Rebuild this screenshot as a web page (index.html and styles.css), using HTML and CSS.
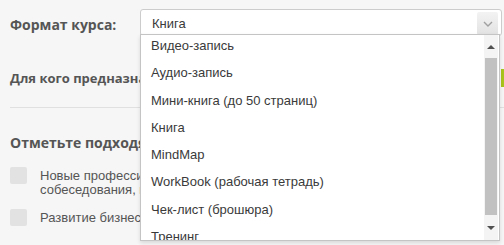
FILE: index.html
```html
<!DOCTYPE html>
<html lang="ru">
<head>
    <meta charset="UTF-8">
    <meta name="viewport" content="width=device-width, initial-scale=1.0">
    <title>Формат курса</title>
    <link rel="stylesheet" href="styles.css">
</head>
<body>

<div class="course-form">
    <div class="field-row">
        <label class="field-label">Формат курса:</label>
        <div class="select-box">
            <span class="select-value">Книга</span>
            <span class="select-arrow">
                <svg width="10" height="6" viewBox="0 0 10 6"><path d="M1 1 L5 5 L9 1" fill="none" stroke="#a0a0a0" stroke-width="1.4"/></svg>
            </span>

            <!-- открытый список -->
            <div class="select-options">
                <ul class="option-list">
                    <li>Видео-запись</li>
                    <li>Аудио-запись</li>
                    <li>Мини-книга (до 50 страниц)</li>
                    <li>Книга</li>
                    <li>MindMap</li>
                    <li>WorkBook (рабочая тетрадь)</li>
                    <li>Чек-лист (брошюра)</li>
                    <li>Тренинг</li>
                    <li>Вебинар</li>
                </ul>
                <div class="scrollbar">
                    <div class="sb-button"><span class="arrow-up"></span></div>
                    <div class="sb-thumb"></div>
                    <div class="sb-button sb-bottom"><span class="arrow-down"></span></div>
                </div>
            </div>
        </div>
    </div>

    <div class="audience-row">
        <label class="audience-label">Для кого предназначен курс:</label>
        <button class="green-btn" aria-label="Выбрать"></button>
    </div>

    <div class="divider"></div>

    <h3 class="topics-title">Отметьте подходящие темы:</h3>

    <div class="check-row">
        <span class="check-box"></span>
        <span class="check-text">Новые профессии, поиск работы, прохождение<br>собеседования, карьера</span>
    </div>
    <div class="check-row">
        <span class="check-box"></span>
        <span class="check-text">Развитие бизнеса</span>
    </div>
</div>

</body>
</html>
```

FILE: styles.css
```css
:root {
    --bg-page: #f6f6f6;
    --text-label: #555555;
    --text-option: #3a3a3a;
    --border-gray: #cccccc;
}

body {
    margin: 0;
    background-color: var(--bg-page);
    font-family: "Liberation Sans", Arial, sans-serif;
    overflow: hidden;
    height: 245px;
}

.course-form {
    padding: 9px 0 0 10px;
}

.field-row {
    display: flex;
    align-items: center;
    height: 27px;
}

.field-label {
    width: 130px;
    flex-shrink: 0;
    font-family: "Open Sans", sans-serif;
    font-weight: bold;
    font-size: 14px;
    color: var(--text-label);
    padding-top: 4px;
}

.select-box {
    flex: 1;
    margin-right: 2px;
    height: 27px;
    box-sizing: border-box;
    border: 1px solid var(--border-gray);
    border-radius: 3px;
    background-color: #fff;
    position: relative;
    z-index: 10;
}

.select-value {
    display: block;
    padding: 2px 0 0 11px;
    line-height: 23px;
    font-size: 13px;
    color: var(--text-option);
}

.select-arrow {
    position: absolute;
    top: 2px;
    right: 3px;
    width: 21px;
    height: 23px;
    border-radius: 2px;
    background: linear-gradient(#f3f3f3, #e2e2e2);
    display: flex;
    align-items: center;
    justify-content: center;
}

/* выпадающий список поверх формы */
.select-options {
    position: absolute;
    top: 24px;
    left: -1px;
    right: 1px;
    height: 207px;
    box-sizing: border-box;
    border: 1px solid #c4c4c4;
    background-color: #fff;
    box-shadow: 0 2px 4px rgba(0, 0, 0, 0.12);
    overflow: hidden;
}

.option-list {
    list-style: none;
    margin: 0;
    padding: 0;
}

.option-list li {
    height: 27.3px;
    box-sizing: border-box;
    padding: 3px 0 0 10px;
    line-height: 15px;
    font-size: 13px;
    color: var(--text-option);
}

.scrollbar {
    position: absolute;
    top: 0;
    right: 1px;
    width: 14px;
    height: 100%;
    background-color: #f4f4f4;
    display: flex;
    flex-direction: column;
}

.sb-button {
    height: 23px;
    display: flex;
    align-items: center;
    justify-content: center;
}

.sb-bottom {
    height: 25px;
    margin-top: auto;
}

.sb-thumb {
    height: 157px;
    margin: 0 1px;
    background-color: #c1c1c1;
}

.arrow-up,
.arrow-down {
    width: 0;
    height: 0;
    border-left: 4px solid transparent;
    border-right: 4px solid transparent;
}

.arrow-up {
    border-bottom: 4px solid #505050;
}

.arrow-down {
    border-top: 4px solid #505050;
}

.audience-row {
    display: flex;
    align-items: center;
    height: 28px;
    margin-top: 28px;
}

.audience-label {
    width: 491px;
    flex-shrink: 0;
    font-family: "Open Sans", sans-serif;
    font-weight: bold;
    font-size: 13px;
    color: var(--text-label);
    white-space: nowrap;
}

.green-btn {
    flex-shrink: 0;
    width: 60px;
    height: 18px;
    border: none;
    background-color: #a9c41c;
}

.divider {
    margin-top: 15px;
    border-top: 1px solid #e0e0e0;
}

.topics-title {
    margin: 25px 0 0;
    font-family: "Open Sans", sans-serif;
    font-weight: bold;
    font-size: 14px;
    line-height: 20px;
    color: var(--text-label);
    white-space: nowrap;
}

.check-row {
    display: flex;
    align-items: flex-start;
    margin-top: 14px;
}

.check-row + .check-row {
    margin-top: 12px;
}

.check-box {
    width: 17px;
    height: 17px;
    flex-shrink: 0;
    border-radius: 2px;
    background-color: #e2e2e2;
}

.check-text {
    margin-left: 13px;
    padding-top: 2px;
    font-size: 13px;
    line-height: 14px;
    color: var(--text-label);
    white-space: nowrap;
}
```
